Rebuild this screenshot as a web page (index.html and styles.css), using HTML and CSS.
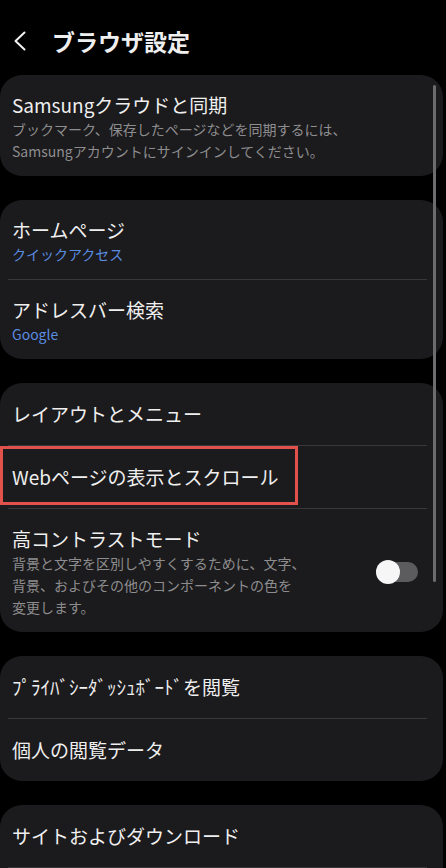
FILE: index.html
```html
<!doctype html>
<html lang="ja">
  <head>
    <meta charset="UTF-8" />
    <meta name="viewport" content="width=device-width, initial-scale=1.0" />
    <title>ブラウザ設定</title>
    <link rel="stylesheet" href="styles.css">
  </head>
  <body>
    <div class="screen">
      <header class="topbar">
        <button class="back" aria-label="戻る">
          <svg width="14" height="20" viewBox="0 0 14 20" fill="none">
            <path d="M11.5 1.5 L2.5 10 L11.5 18.5" stroke="#f2f2f2" stroke-width="2" stroke-linecap="round" stroke-linejoin="round" />
          </svg>
        </button>
        <h1>ブラウザ設定</h1>
      </header>

      <main class="settings">
        <section class="card">
          <div class="item has-sub">
            <div class="item-text">
              <p class="item-title">Samsungクラウドと同期</p>
              <p class="item-sub">ブックマーク、保存したページなどを同期するには、<br>Samsungアカウントにサインインしてください。</p>
            </div>
          </div>
        </section>

        <section class="card">
          <div class="item has-sub">
            <div class="item-text">
              <p class="item-title">ホームページ</p>
              <p class="item-value">クイックアクセス</p>
            </div>
          </div>
          <hr class="divider">
          <div class="item has-sub">
            <div class="item-text">
              <p class="item-title">アドレスバー検索</p>
              <p class="item-value">Google</p>
            </div>
          </div>
        </section>

        <section class="card">
          <div class="item">
            <p class="item-title">レイアウトとメニュー</p>
          </div>
          <hr class="divider">
          <div class="item highlighted">
            <p class="item-title">Webページの表示とスクロール</p>
            <!-- 注目枠 -->
            <span class="highlight-box"></span>
          </div>
          <hr class="divider">
          <div class="item has-sub">
            <div class="item-text">
              <p class="item-title">高コントラストモード</p>
              <p class="item-sub">背景と文字を区別しやすくするために、文字、<br>背景、およびその他のコンポーネントの色を<br>変更します。</p>
            </div>
            <span class="switch" role="switch" aria-checked="false"></span>
          </div>
        </section>

        <section class="card">
          <div class="item">
            <p class="item-title">ﾌﾟﾗｲﾊﾞｼｰﾀﾞｯｼｭﾎﾞｰﾄﾞを閲覧</p>
          </div>
          <hr class="divider">
          <div class="item">
            <p class="item-title">個人の閲覧データ</p>
          </div>
        </section>

        <section class="card">
          <div class="item">
            <p class="item-title">サイトおよびダウンロード</p>
          </div>
          <hr class="divider">
          <div class="item item-empty"></div>
        </section>
      </main>

      <div class="scrollbar"></div>
    </div>
  </body>
</html>
```

FILE: styles.css
```css
:root {
  --bg: #000000;
  --card-bg: #1b1a1c;
  --divider: #38373a;
  --text-color: #efefef;
  --text-light: #8d8d8f;
  --accent: #5a8de0;
  --mark: #e0524b;
}

* {
  box-sizing: border-box;
  margin: 0;
  padding: 0;
}

html,
body {
  height: 100%;
}

body {
  font-family: "Noto Sans CJK JP", "Noto Sans", sans-serif;
  background-color: var(--bg);
  color: var(--text-color);
  overflow: hidden;
}

.screen {
  position: relative;
  width: 446px;
  height: 868px;
  overflow: hidden;
}

.topbar {
  display: flex;
  align-items: center;
  height: 75px;
  padding: 24px 0 17px;
}

.back {
  display: flex;
  align-items: center;
  width: 52px;
  height: 34px;
  padding-left: 13px;
  background: none;
  border: none;
}

h1 {
  font-size: 23px;
  font-weight: 700;
  line-height: 34px;
  color: var(--text-color);
}

.card {
  margin-right: 3px;
  background-color: var(--card-bg);
  border-radius: 22px;
}

.card + .card {
  margin-top: 24px;
}

.item {
  display: flex;
  align-items: center;
  padding: 18px 12px;
}

.item.has-sub {
  padding: 17px 12px 14px;
}

.item-empty {
  height: 62px;
}

.item-text {
  flex: 1;
}

.item-title {
  font-size: 19px;
  line-height: 26px;
  color: var(--text-color);
}

.item-sub {
  font-size: 14px;
  line-height: 22px;
  color: var(--text-light);
}

.item-value {
  font-size: 14px;
  line-height: 22px;
  color: var(--accent);
}

.divider {
  height: 1px;
  margin: 0 16px 0 8px;
  border: none;
  background-color: var(--divider);
}

.highlighted {
  position: relative;
}

.highlight-box {
  position: absolute;
  left: 0;
  top: 0;
  width: 298px;
  height: 59px;
  border: 3px solid var(--mark);
}

.switch {
  position: relative;
  flex-shrink: 0;
  width: 42px;
  height: 20px;
  margin-right: 13px;
  border-radius: 10px;
  background-color: #5c5c5e;
}

.switch::after {
  content: "";
  position: absolute;
  left: 0;
  top: -2px;
  width: 24px;
  height: 24px;
  border-radius: 50%;
  background-color: #f6f6f6;
}

.scrollbar {
  position: absolute;
  left: 433px;
  top: 85px;
  width: 3px;
  height: 497px;
  border-radius: 2px;
  background-color: #6c6c6e;
}
```
